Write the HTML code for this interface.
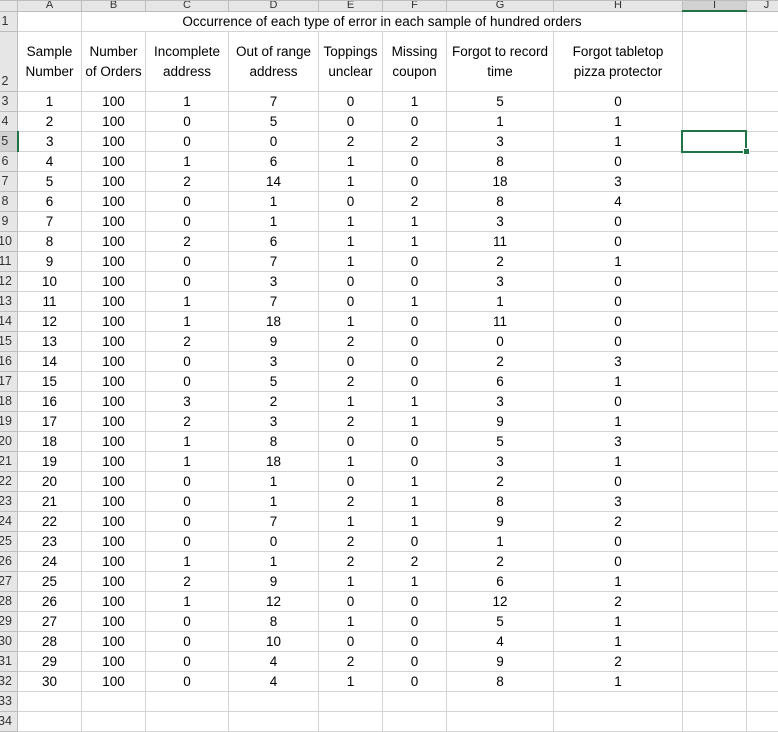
<!DOCTYPE html>
<html><head><style>
body{margin:0;width:778px;height:716px;overflow:hidden;background:#fff;position:relative;font-family:"Liberation Sans",sans-serif;}
table{position:absolute;left:-8px;top:0;width:794px;border-collapse:collapse;table-layout:fixed;font-size:13.5px;color:#000;}
td{border:1px solid #d4d4d4;padding:0;text-align:center;height:19px;line-height:19px;overflow:hidden;white-space:nowrap;}
tr.h td{height:9px;line-height:9px;font-size:11px;background:#e6e6e6;border-color:#bdbdbd;color:#333;}
td.r{background:#e6e6e6;border-color:#bdbdbd;color:#333;font-size:12.5px;}
tr.t td.r{vertical-align:bottom;}
tr.t td{height:59px;line-height:20px;white-space:normal;}
#sel{position:absolute;left:681px;top:130px;width:62px;height:19px;border:2px solid #217346;}
#sq{position:absolute;left:743px;top:148px;width:5px;height:5px;background:#217346;border:1px solid #fff;}
</style></head><body>
<table>
<colgroup><col style="width:25px"><col style="width:64px"><col style="width:64px"><col style="width:83px"><col style="width:90px"><col style="width:64px"><col style="width:64px"><col style="width:107px"><col style="width:129px"><col style="width:64px"><col style="width:40px"></colgroup>
<tr class="h"><td></td><td>A</td><td>B</td><td>C</td><td>D</td><td>E</td><td>F</td><td>G</td><td>H</td><td style="background:#d2d2d2;border-bottom:2px solid #217346">I</td><td>J</td></tr>
<tr><td class="r">1</td><td></td><td colspan="7">Occurrence of each type of error in each sample of hundred orders</td><td></td><td></td></tr>
<tr class="t"><td class="r">2</td><td>Sample Number</td><td>Number of Orders</td><td>Incomplete address</td><td>Out of range address</td><td>Toppings unclear</td><td>Missing coupon</td><td>Forgot to record time</td><td>Forgot tabletop<br>pizza protector</td><td></td><td></td></tr>
<tr><td class="r">3</td><td>1</td><td>100</td><td>1</td><td>7</td><td>0</td><td>1</td><td>5</td><td>0</td><td></td><td></td></tr>
<tr><td class="r">4</td><td>2</td><td>100</td><td>0</td><td>5</td><td>0</td><td>0</td><td>1</td><td>1</td><td></td><td></td></tr>
<tr><td class="r" style="background:#d2d2d2;border-right:2px solid #217346">5</td><td>3</td><td>100</td><td>0</td><td>0</td><td>2</td><td>2</td><td>3</td><td>1</td><td></td><td></td></tr>
<tr><td class="r">6</td><td>4</td><td>100</td><td>1</td><td>6</td><td>1</td><td>0</td><td>8</td><td>0</td><td></td><td></td></tr>
<tr><td class="r">7</td><td>5</td><td>100</td><td>2</td><td>14</td><td>1</td><td>0</td><td>18</td><td>3</td><td></td><td></td></tr>
<tr><td class="r">8</td><td>6</td><td>100</td><td>0</td><td>1</td><td>0</td><td>2</td><td>8</td><td>4</td><td></td><td></td></tr>
<tr><td class="r">9</td><td>7</td><td>100</td><td>0</td><td>1</td><td>1</td><td>1</td><td>3</td><td>0</td><td></td><td></td></tr>
<tr><td class="r">10</td><td>8</td><td>100</td><td>2</td><td>6</td><td>1</td><td>1</td><td>11</td><td>0</td><td></td><td></td></tr>
<tr><td class="r">11</td><td>9</td><td>100</td><td>0</td><td>7</td><td>1</td><td>0</td><td>2</td><td>1</td><td></td><td></td></tr>
<tr><td class="r">12</td><td>10</td><td>100</td><td>0</td><td>3</td><td>0</td><td>0</td><td>3</td><td>0</td><td></td><td></td></tr>
<tr><td class="r">13</td><td>11</td><td>100</td><td>1</td><td>7</td><td>0</td><td>1</td><td>1</td><td>0</td><td></td><td></td></tr>
<tr><td class="r">14</td><td>12</td><td>100</td><td>1</td><td>18</td><td>1</td><td>0</td><td>11</td><td>0</td><td></td><td></td></tr>
<tr><td class="r">15</td><td>13</td><td>100</td><td>2</td><td>9</td><td>2</td><td>0</td><td>0</td><td>0</td><td></td><td></td></tr>
<tr><td class="r">16</td><td>14</td><td>100</td><td>0</td><td>3</td><td>0</td><td>0</td><td>2</td><td>3</td><td></td><td></td></tr>
<tr><td class="r">17</td><td>15</td><td>100</td><td>0</td><td>5</td><td>2</td><td>0</td><td>6</td><td>1</td><td></td><td></td></tr>
<tr><td class="r">18</td><td>16</td><td>100</td><td>3</td><td>2</td><td>1</td><td>1</td><td>3</td><td>0</td><td></td><td></td></tr>
<tr><td class="r">19</td><td>17</td><td>100</td><td>2</td><td>3</td><td>2</td><td>1</td><td>9</td><td>1</td><td></td><td></td></tr>
<tr><td class="r">20</td><td>18</td><td>100</td><td>1</td><td>8</td><td>0</td><td>0</td><td>5</td><td>3</td><td></td><td></td></tr>
<tr><td class="r">21</td><td>19</td><td>100</td><td>1</td><td>18</td><td>1</td><td>0</td><td>3</td><td>1</td><td></td><td></td></tr>
<tr><td class="r">22</td><td>20</td><td>100</td><td>0</td><td>1</td><td>0</td><td>1</td><td>2</td><td>0</td><td></td><td></td></tr>
<tr><td class="r">23</td><td>21</td><td>100</td><td>0</td><td>1</td><td>2</td><td>1</td><td>8</td><td>3</td><td></td><td></td></tr>
<tr><td class="r">24</td><td>22</td><td>100</td><td>0</td><td>7</td><td>1</td><td>1</td><td>9</td><td>2</td><td></td><td></td></tr>
<tr><td class="r">25</td><td>23</td><td>100</td><td>0</td><td>0</td><td>2</td><td>0</td><td>1</td><td>0</td><td></td><td></td></tr>
<tr><td class="r">26</td><td>24</td><td>100</td><td>1</td><td>1</td><td>2</td><td>2</td><td>2</td><td>0</td><td></td><td></td></tr>
<tr><td class="r">27</td><td>25</td><td>100</td><td>2</td><td>9</td><td>1</td><td>1</td><td>6</td><td>1</td><td></td><td></td></tr>
<tr><td class="r">28</td><td>26</td><td>100</td><td>1</td><td>12</td><td>0</td><td>0</td><td>12</td><td>2</td><td></td><td></td></tr>
<tr><td class="r">29</td><td>27</td><td>100</td><td>0</td><td>8</td><td>1</td><td>0</td><td>5</td><td>1</td><td></td><td></td></tr>
<tr><td class="r">30</td><td>28</td><td>100</td><td>0</td><td>10</td><td>0</td><td>0</td><td>4</td><td>1</td><td></td><td></td></tr>
<tr><td class="r">31</td><td>29</td><td>100</td><td>0</td><td>4</td><td>2</td><td>0</td><td>9</td><td>2</td><td></td><td></td></tr>
<tr><td class="r">32</td><td>30</td><td>100</td><td>0</td><td>4</td><td>1</td><td>0</td><td>8</td><td>1</td><td></td><td></td></tr>
<tr><td class="r">33</td><td></td><td></td><td></td><td></td><td></td><td></td><td></td><td></td><td></td><td></td></tr>
<tr><td class="r">34</td><td></td><td></td><td></td><td></td><td></td><td></td><td></td><td></td><td></td><td></td></tr>
</table>
<div id="sel"></div><div id="sq"></div>
</body></html>
